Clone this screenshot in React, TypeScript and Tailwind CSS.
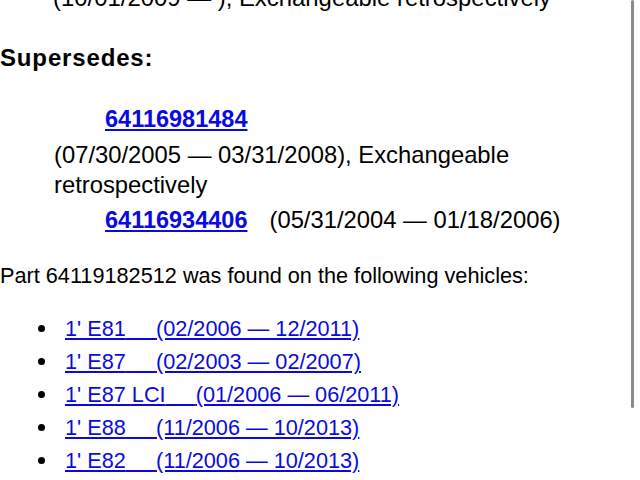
export default function App() {
  const vehicles = [
    { model: "1' E81", range: "(02/2006 — 12/2011)" },
    { model: "1' E87", range: "(02/2003 — 02/2007)" },
    { model: "1' E87 LCI", range: "(01/2006 — 06/2011)" },
    { model: "1' E88", range: "(11/2006 — 10/2013)" },
    { model: "1' E82", range: "(11/2006 — 10/2013)" },
  ];

  return (
    <div
      className="relative h-[480px] w-[640px] overflow-hidden bg-white text-[21.7px] leading-[30px] text-black"
      style={{ fontFamily: '"Liberation Sans", Arial, sans-serif' }}
    >
      <div className="-mt-[17px] pl-[53px] text-[23.9px]">(10/01/2009 — ), Exchangeable retrospectively</div>

      <div className="mt-[30px] text-[24px] font-bold tracking-[0.85px]">Supersedes:</div>

      <div className="mt-[31px] pl-[54px] text-[23.8px]">
        <div className="pl-[51px]">
          <a href="#" className="text-[23.5px] font-bold text-[#0a0ae0] underline">64116981484</a>
        </div>
        <div className="mt-[6px]">
          (07/30/2005 — 03/31/2008), Exchangeable
          <br />
          retrospectively
        </div>
        <div className="mt-[5px] pl-[51px]">
          <a href="#" className="text-[23.5px] font-bold text-[#0a0ae0] underline">64116934406</a>
          <span className="ml-[22px]">(05/31/2004 — 01/18/2006)</span>
        </div>
      </div>

      <div className="mt-[26px]">Part 64119182512 was found on the following vehicles:</div>

      <ul className="mt-[21px] pl-[38px]">
        {vehicles.map((v) => (
          <li key={v.model} className="flex items-center leading-[33px]">
            <span className="mr-[20px] h-[7px] w-[7px] shrink-0 rounded-full bg-black" />
            <a href="#" className="text-[#0a0ae0] underline whitespace-pre">
              {v.model}
              {"     "}
              {v.range}
            </a>
          </li>
        ))}
      </ul>

      <div className="absolute right-[6px] top-0 h-[408px] w-[3px] rounded-full bg-[#8a8a8a]" />
    </div>
  );
}
